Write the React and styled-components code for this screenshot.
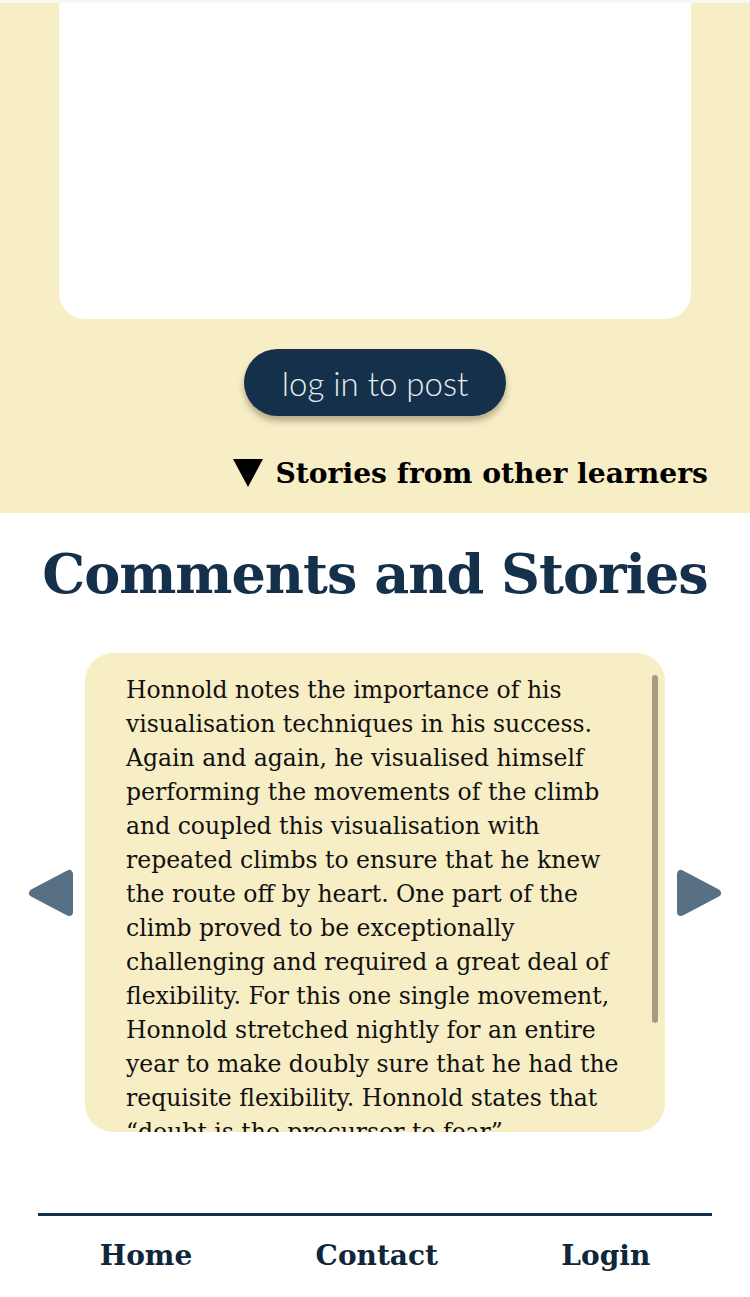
import React from "react";
import styled, { createGlobalStyle } from "styled-components";

const GlobalStyle = createGlobalStyle`
  body {
    margin: 0;
    background: #ffffff;
    font-family: "DejaVu Serif", "Liberation Serif", serif;
  }
`;

const serif = `"DejaVu Serif", "Liberation Serif", serif`;

const TopStrip = styled.div`
  height: 3px;
  background: #f7f7f6;
`;

const PostSection = styled.section`
  background: #f8eec6;
  display: flex;
  flex-direction: column;
  align-items: center;
  padding-bottom: 20px;
`;

const Editor = styled.div`
  align-self: stretch;
  margin: 0 59px;
  height: 316px;
  background: #ffffff;
  border-radius: 0 0 26px 26px;
`;

const PostButton = styled.button`
  margin-top: 30px;
  width: 262px;
  height: 67px;
  border: none;
  border-radius: 34px;
  background: #15304a;
  color: #e8edf0;
  font-family: Lato, "Open Sans", sans-serif;
  font-weight: 300;
  font-size: 33px;
  box-shadow: 0 5px 6px rgba(60, 50, 20, 0.35);
  cursor: pointer;
`;

const Summary = styled.div`
  align-self: flex-end;
  margin-top: 37px;
  padding-right: 42px;
  height: 40px;
  display: flex;
  align-items: center;
  gap: 12px;
  font-family: ${serif};
  font-weight: 700;
  font-size: 28.2px;
  color: #000;
`;

const Caret = styled.span`
  width: 0;
  height: 0;
  border-left: 15.5px solid transparent;
  border-right: 15.5px solid transparent;
  border-top: 28px solid #000;
`;

const Heading = styled.h1`
  margin: 26px 0 0;
  line-height: 70px;
  text-align: center;
  font-family: ${serif};
  font-weight: 700;
  font-size: 54px;
  letter-spacing: -1px;
  color: #15304a;
`;

const Carousel = styled.div`
  margin-top: 44px;
  display: flex;
  justify-content: center;
  align-items: center;
  gap: 11px;
`;

const ArrowButton = styled.button`
  padding: 0;
  border: none;
  background: none;
  width: 47px;
  height: 50px;
  cursor: pointer;
  svg {
    display: block;
  }
`;

const Card = styled.div`
  position: relative;
  width: 580px;
  height: 479px;
  border-radius: 28px;
  background: #f8eec6;
  overflow: hidden;
`;

const ScrollArea = styled.div`
  height: 100%;
  overflow-y: auto;
  box-sizing: border-box;
  padding: 20px 14px 0 41px;
  scrollbar-width: none;
  &::-webkit-scrollbar {
    display: none;
  }
`;

const Story = styled.p`
  margin: 0;
  white-space: pre;
  font-family: ${serif};
  font-size: 23.5px;
  line-height: 34px;
  color: #111;
`;

const Thumb = styled.div`
  position: absolute;
  top: 22px;
  right: 7px;
  width: 6px;
  height: 348px;
  border-radius: 3px;
  background: #a89c80;
`;

const Footer = styled.nav`
  margin: 81px 38px 0;
  border-top: 3px solid #15304a;
  display: flex;
  justify-content: space-around;
  padding: 20px 0 19px;
`;

const FooterLink = styled.a`
  font-family: ${serif};
  font-weight: 700;
  font-size: 28px;
  line-height: 40px;
  color: #10263a;
  text-decoration: none;
`;

const Arrow = ({ dir }) => (
  <ArrowButton aria-label={dir === "left" ? "previous" : "next"}>
    <svg width="47" height="50" viewBox="0 0 47 50">
      <polygon
        points={dir === "left" ? "6,25 42,6 42,44" : "41,25 5,6 5,44"}
        fill="#587083"
        stroke="#587083"
        strokeWidth="8"
        strokeLinejoin="round"
      />
    </svg>
  </ArrowButton>
);

// line breaks follow the original layout of the card
const storyLines = [
  "Honnold notes the importance of his",
  "visualisation techniques in his success.",
  "Again and again, he visualised himself",
  "performing the movements of the climb",
  "and coupled this visualisation with",
  "repeated climbs to ensure that he knew",
  "the route off by heart. One part of the",
  "climb proved to be exceptionally",
  "challenging and required a great deal of",
  "flexibility. For this one single movement,",
  "Honnold stretched nightly for an entire",
  "year to make doubly sure that he had the",
  "requisite flexibility. Honnold states that",
  "\u201cdoubt is the precursor to fear\u201d.",
];

const App = () => {
  return (
    <>
      <GlobalStyle />
      <TopStrip />
      <PostSection>
        <Editor />
        <PostButton>log in to post</PostButton>
        <Summary>
          <Caret />
          Stories from other learners
        </Summary>
      </PostSection>
      <Heading>Comments and Stories</Heading>
      <Carousel>
        <Arrow dir="left" />
        <Card>
          <ScrollArea>
            <Story>{storyLines.join("\n")}</Story>
          </ScrollArea>
          <Thumb />
        </Card>
        <Arrow dir="right" />
      </Carousel>
      <Footer>
        <FooterLink href="#">Home</FooterLink>
        <FooterLink href="#">Contact</FooterLink>
        <FooterLink href="#">Login</FooterLink>
      </Footer>
    </>
  );
};

export default App;
